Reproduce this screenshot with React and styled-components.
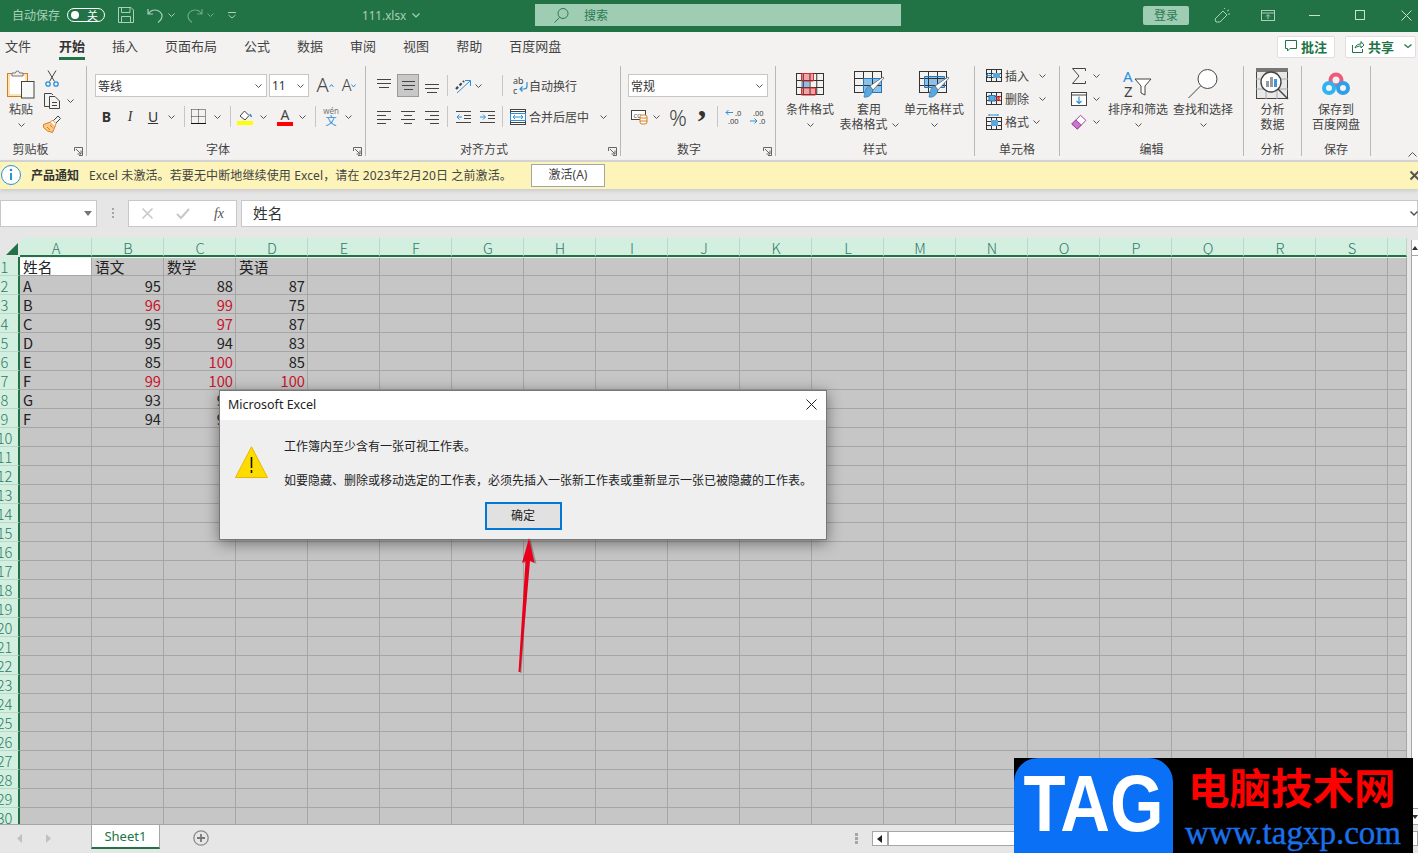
import React from "react";
import styled, { createGlobalStyle } from "styled-components";

const UI = `"Noto Sans", "Noto Sans CJK SC", sans-serif`;
const CELL = `"Noto Sans CJK SC", "Noto Sans", sans-serif`;
const GREEN = "#217346";
const INK = "#444";
const BLUE = "#2b8fd9";

const GlobalStyle = createGlobalStyle`
  html, body { margin: 0; padding: 0; height: 100%; overflow: hidden; background: #e6e6e6; }
  #root { height: 100%; }
`;

const Page = styled.div`
  position: relative;
  width: 1418px;
  height: 853px;
  overflow: hidden;
  display: flex;
  flex-direction: column;
  font-family: ${UI};
  font-size: 12px;
  color: ${INK};
`;

/* ---- title bar ---- */
const TitleBar = styled.div`
  height: 32px;
  flex-shrink: 0;
  box-sizing: border-box;
  padding-bottom: 2px;
  background: ${GREEN};
  display: grid;
  grid-template-columns: 535px 366px 1fr;
  align-items: center;
  color: #a9d0bb;
`;
const TitleSide = styled.div`
  display: flex;
  align-items: center;
  padding-left: ${(p) => p.$pl || 0}px;
`;
const TitleSlot = styled.span`
  display: flex;
  align-items: center;
  justify-content: center;
  width: ${(p) => p.$w}px;
  margin-left: ${(p) => p.$ml || 0}px;
  flex-shrink: 0;
`;
const AutoSave = styled.span`
  width: 48px;
  white-space: nowrap;
  font-size: 12px;
`;
const Toggle = styled.span`
  margin-left: 7px;
  width: 38px;
  height: 14px;
  border: 1px solid #fff;
  border-radius: 8px;
  box-sizing: border-box;
  display: flex;
  align-items: center;
  justify-content: space-between;
  padding: 0 6px 0 3px;
  color: #fff;
  font-size: 11px;
  &::before {
    content: "";
    width: 8px;
    height: 8px;
    border-radius: 50%;
    background: #fff;
  }
`;
const FileName = styled.span`
  margin-left: 126px;
  font-size: 11.7px;
  display: flex;
  align-items: center;
  gap: 6px;
`;
const SearchBox = styled.div`
  height: 22px;
  background: #9fcdb3;
  display: flex;
  align-items: center;
  padding-left: 19px;
  gap: 16px;
  color: #2c7a52;
  font-size: 12px;
`;
const Login = styled.span`
  margin-left: 242px;
  width: 46px;
  height: 19px;
  border-radius: 2px;
  background: #9fcdb3;
  color: #2c7a52;
  text-align: center;
  line-height: 20px;
  font-size: 12px;
`;

/* ---- tabs ---- */
const TabBar = styled.div`
  height: 32px;
  flex-shrink: 0;
  background: #f3f2f1;
  display: flex;
  padding: 0 2px 0 5px;
`;
const TabList = styled.div`
  display: flex;
  gap: 27px;
`;
const Tab = styled.span`
  height: 28px;
  box-sizing: border-box;
  padding-top: 5px;
  line-height: 19px;
  font-size: 13px;
  color: ${(p) => (p.$active ? "#333" : INK)};
  font-weight: ${(p) => (p.$active ? 700 : 400)};
  border-bottom: 3px solid ${(p) => (p.$active ? GREEN : "transparent")};
  margin-left: ${(p) => (p.$active ? 1 : 0)}px;
`;
const TabActions = styled.div`
  margin-left: auto;
  margin-top: 4px;
  display: flex;
  gap: 10px;
`;
const ActionButton = styled.span`
  width: ${(p) => p.$w}px;
  height: 22px;
  box-sizing: border-box;
  background: #fff;
  border: 1px solid #e1dfdd;
  border-radius: 2px;
  display: flex;
  align-items: center;
  justify-content: ${(p) => (p.$start ? "flex-start" : "center")};
  padding: 0 0 2px ${(p) => (p.$start ? 6 : 0)}px;
  gap: 4px;
  color: ${GREEN};
  font-weight: 700;
  font-size: 13px;
`;

/* ---- ribbon ---- */
const Ribbon = styled.div`
  height: 96px;
  flex-shrink: 0;
  box-sizing: border-box;
  padding: 2px 0 4px;
  background: #f3f2f1;
  display: flex;
  position: relative;
`;
const Group = styled.div`
  width: ${(p) => p.$w}px;
  box-sizing: border-box;
  border-right: 1px solid #b8b8b8;
  display: flex;
  flex-direction: column;
`;
const GroupBody = styled.div`
  flex: 1;
  display: flex;
  padding-left: ${(p) => p.$pl || 0}px;
`;
const Rows = styled.div`
  display: flex;
  flex-direction: column;
  gap: 8px;
  padding-top: 8px;
`;
const ToolRow = styled.div`
  display: flex;
  align-items: center;
  height: 23px;
  white-space: nowrap;
`;
const Tool = styled.span`
  width: ${(p) => p.$w}px;
  height: ${(p) => (p.$active ? "23px" : "auto")};
  margin-left: ${(p) => p.$ml || 0}px;
  flex-shrink: 0;
  display: flex;
  align-items: center;
  justify-content: center;
  box-sizing: border-box;
  background: ${(p) => (p.$active ? "#c8c8c8" : "transparent")};
  border: ${(p) => (p.$active ? "1px solid #9b9b9b" : "0")};
`;
const Divider = styled.span`
  width: 1px;
  height: 21px;
  flex-shrink: 0;
  background: #c8c6c4;
  margin-left: ${(p) => p.$ml || 0}px;
`;
const Select = styled.span`
  width: ${(p) => p.$w}px;
  height: 23px;
  margin-left: ${(p) => p.$ml || 0}px;
  box-sizing: border-box;
  background: #fff;
  border: 1px solid #c8c6c4;
  display: flex;
  align-items: center;
  justify-content: space-between;
  padding: 0 4px 0 2px;
  color: #333;
  font-size: 12px;
`;
const RowText = styled.span`
  margin-left: ${(p) => p.$ml || 0}px;
  font-size: 12px;
  color: ${INK};
`;
const Stack = styled.div`
  width: ${(p) => p.$w || "auto"};
  display: flex;
  flex-direction: column;
  gap: 3px;
  padding-top: ${(p) => p.$pt || 0}px;
  box-sizing: border-box;
`;
const StackRow = styled.div`
  height: 20px;
  display: flex;
  align-items: center;
  white-space: nowrap;
`;
const BigButton = styled.div`
  width: ${(p) => p.$w}px;
  margin-left: ${(p) => p.$ml || 0}px;
  flex-shrink: 0;
  padding-top: 4px;
  display: flex;
  flex-direction: column;
  align-items: center;
`;
const BigIcon = styled.div`
  height: 32px;
  box-sizing: border-box;
  padding-bottom: 4px;
  display: flex;
  align-items: center;
  justify-content: center;
`;
const BigLine = styled.div`
  height: 15px;
  line-height: 15px;
  font-size: 12px;
  white-space: nowrap;
  display: flex;
  align-items: center;
  gap: 4px;
  color: ${INK};
`;
const GroupLabel = styled.div`
  position: relative;
  height: 15px;
  line-height: 17px;
  text-align: center;
  font-size: 12px;
  color: ${INK};
  padding-right: ${(p) => p.$pr || 0}px;
`;
const Launcher = styled.svg`
  position: absolute;
  right: 3px;
  bottom: 0;
`;
const Collapse = styled.svg`
  position: absolute;
  right: 1px;
  bottom: 3px;
`;
const LetterA = styled.span`
  font-size: ${(p) => p.$s}px;
  font-weight: 300;
  line-height: 1;
  color: ${INK};
  position: relative;
  top: -1px;
`;
const StyleLetter = styled.span`
  font-size: 14px;
  font-weight: ${(p) => (p.$b ? 700 : 400)};
  font-style: ${(p) => (p.$i ? "italic" : "normal")};
  text-decoration: ${(p) => (p.$u ? "underline" : "none")};
  color: #333;
  font-family: ${(p) => (p.$b || p.$u ? UI : `"Liberation Serif", serif`)};
`;
const Percent = styled.span`
  font-size: 22px;
  font-weight: 300;
  line-height: 1;
  color: ${INK};
`;
const Comma = styled.span`
  font-family: "Liberation Serif", serif;
  font-size: 34px;
  font-weight: 700;
  line-height: 1;
  height: 21px;
  color: #333;
  position: relative;
  top: -18px;
`;

/* ---- notice ---- */
const Notice = styled.div`
  height: 29px;
  flex-shrink: 0;
  box-sizing: border-box;
  border-top: 2px solid #d2d2d2;
  padding: 0 0 1px 1px;
  background: #fcf4b8;
  display: flex;
  align-items: center;
  font-size: 12px;
  color: #444;
  box-shadow: 0 2px 4px rgba(0, 0, 0, 0.12);
  position: relative;
  z-index: 1;
`;
const NoticeTitle = styled.b`
  margin-left: 10px;
  color: #333;
  padding-bottom: 1px;
`;
const NoticeText = styled.span`
  margin-left: 10px;
  padding-bottom: 1px;
  white-space: nowrap;
  width: 418px;
  letter-spacing: 0.12px;
`;
const ActivateButton = styled.span`
  margin-left: 24px;
  width: 74px;
  height: 23px;
  box-sizing: border-box;
  background: #fff;
  border: 1px solid #a6a6a6;
  text-align: center;
  line-height: 20px;
`;
const NoticeClose = styled.span`
  margin-left: auto;
  margin-right: -1px;
  display: flex;
`;

/* ---- formula bar ---- */
const FormulaBar = styled.div`
  height: 49px;
  flex-shrink: 0;
  box-sizing: border-box;
  background: #e6e6e6;
  padding-top: 11px;
  display: flex;
  align-items: flex-start;
`;
const FormulaBox = styled.div`
  height: 27px;
  box-sizing: border-box;
  background: #fff;
  border: 1px solid #c8c8c8;
  display: flex;
  align-items: center;
  width: ${(p) => (p.$w ? `${p.$w}px` : "auto")};
  flex: ${(p) => (p.$w ? "none" : 1)};
  margin-left: ${(p) => p.$ml || 0}px;
`;
const FormulaText = styled.span`
  font-family: ${CELL};
  font-size: 14.67px;
  margin-left: 11px;
  padding-bottom: 3px;
  color: #333;
`;
const FxLabel = styled.span`
  font-family: "Liberation Serif", serif;
  font-style: italic;
  font-size: 14px;
  color: #555;
`;
const DotsV = styled.span`
  width: 2px;
  height: 10px;
  margin: 8px 14px 0 15px;
  background: repeating-linear-gradient(#a6a6a6 0 2px, transparent 2px 4px);
`;

/* ---- sheet ---- */
const SheetArea = styled.div`
  flex: 1;
  display: flex;
  overflow: hidden;
  background: #e6e6e6;
`;
const SheetGrid = styled.div`
  width: 1407px;
  flex-shrink: 0;
  display: grid;
  grid-template-columns: 20px repeat(19, 72px) 19px;
  grid-auto-rows: 19px;
  font-family: ${CELL};
  font-size: 14.67px;
  overflow: hidden;
`;
const HeadCell = styled.div`
  box-sizing: border-box;
  background: #d3efdf;
  border-bottom: 2px solid ${GREEN};
  border-right: 1px solid #bcd6c7;
  padding-left: 1px;
  color: #2f7a6a;
  text-align: center;
  line-height: 19px;
  font-weight: 300;
  overflow: hidden;
`;
const Corner = styled(HeadCell)`
  border-right: 0;
  position: relative;
  background: #e6e6e6;
  border-bottom: 0;
  &::after {
    content: "";
    position: absolute;
    right: 2px;
    bottom: 2px;
    border-style: solid;
    border-width: 0 0 12px 12px;
    border-color: transparent transparent ${GREEN} transparent;
  }
`;
const RowHead = styled.div`
  box-sizing: border-box;
  background: #d3efdf;
  border-right: 2px solid ${GREEN};
  border-bottom: 1px solid #bcd6c7;
  color: #2f7a6a;
  font-weight: 300;
  display: flex;
  justify-content: center;
  width: 20px;
  padding-right: 9px;
  line-height: 19px;
  white-space: nowrap;
  overflow: hidden;
`;
const Cell = styled.div`
  box-sizing: border-box;
  background: ${(p) => (p.$selected ? "#fff" : "#c6c6c6")};
  border-right: 1px solid #a6a6a6;
  border-bottom: 1px solid #a6a6a6;
  border-top: ${(p) => (p.$first ? "1px solid #f2f2f2" : "0")};
  padding: 0 2px 0 3px;
  text-align: ${(p) => (p.$num ? "right" : "left")};
  color: ${(p) => (p.$red ? "#c8142c" : "#222")};
  font-weight: 400;
  line-height: ${(p) => (p.$first ? "18px" : "20px")};
  white-space: nowrap;
  overflow: hidden;
`;
const VScroll = styled.div`
  flex: 1;
  margin: 2px 0 0 4px;
  background: #fff;
  border-left: 1px solid #a6a6a6;
  display: flex;
  flex-direction: column;
  justify-content: space-between;
  align-items: center;
`;
const VScrollButton = styled.div`
  width: 100%;
  height: 15px;
  border-bottom: 1px solid #a6a6a6;
  display: flex;
  align-items: center;
  justify-content: center;
  & + & {
    border-bottom: 0;
    border-top: 1px solid #a6a6a6;
  }
`;

/* ---- bottom bar ---- */
const BottomBar = styled.div`
  height: 29px;
  flex-shrink: 0;
  box-sizing: border-box;
  background: #e6e6e6;
  border-top: 1px solid #a6a6a6;
  display: flex;
  align-items: flex-start;
`;
const NavArrow = styled.svg`
  margin: 9px 0 0 ${(p) => p.$ml}px;
  flex-shrink: 0;
`;
const SheetTab = styled.div`
  margin-left: 40px;
  width: 69px;
  height: 24px;
  box-sizing: border-box;
  background: #fff;
  border-left: 1px solid #a6a6a6;
  border-right: 1px solid #a6a6a6;
  border-bottom: 2px solid ${GREEN};
  text-align: center;
  color: ${GREEN};
  font-size: 13px;
  line-height: 23px;
`;
const AddSheet = styled.svg`
  margin: 5px 0 0 33px;
  flex-shrink: 0;
`;
const BottomDots = styled.span`
  width: 3px;
  height: 11px;
  margin: 8px 0 0 646px;
  background: repeating-linear-gradient(#a6a6a6 0 3px, transparent 3px 4px);
`;
const HScroll = styled.div`
  margin: 6px 0 0 14px;
  width: 547px;
  height: 15px;
  box-sizing: border-box;
  background: #fff;
  border: 1px solid #a6a6a6;
  display: flex;
`;
const HScrollButton = styled.div`
  width: 14px;
  border-right: 2px solid #a6a6a6;
  display: flex;
  align-items: center;
  justify-content: center;
`;

/* ---- dialog ---- */
const Dialog = styled.div`
  position: absolute;
  left: 219px;
  top: 390px;
  width: 608px;
  height: 150px;
  box-sizing: border-box;
  border: 1px solid #777;
  background: #efefef;
  box-shadow: 0 3px 14px rgba(0, 0, 0, 0.45);
  z-index: 3;
  display: flex;
  flex-direction: column;
`;
const DialogTitle = styled.div`
  height: 29px;
  flex-shrink: 0;
  box-sizing: border-box;
  padding: 0 9px 3px 8px;
  background: #fff;
  display: flex;
  align-items: center;
  justify-content: space-between;
  font-size: 12.5px;
  color: #222;
`;
const DialogBody = styled.div`
  display: flex;
  padding: 26px 0 0 15px;
`;
const DialogText = styled.div`
  margin: -8px 0 0 16px;
  font-size: 12px;
  color: #222;
  white-space: nowrap;
`;
const DialogLine = styled.div`
  height: 17px;
  line-height: 17px;
  margin-bottom: 17px;
`;
const DialogFoot = styled.div`
  display: flex;
  justify-content: center;
  margin-top: -4px;
`;
const OkButton = styled.span`
  width: 77px;
  height: 28px;
  box-sizing: border-box;
  border: 2px solid #0078d7;
  background: #e1e1e1;
  text-align: center;
  line-height: 24px;
  font-size: 12px;
  color: #222;
`;
const Arrow = styled.svg`
  position: absolute;
  left: 510px;
  top: 535px;
  z-index: 4;
`;

/* ---- watermark ---- */
const Watermark = styled.div`
  position: absolute;
  left: 1014px;
  top: 758px;
  width: 399px;
  height: 95px;
  background: #000;
  z-index: 5;
  display: flex;
`;
const WatermarkBadge = styled.div`
  width: 159px;
  height: 95px;
  border-radius: 24px 24px 0 0;
  background: #0a70f5;
  color: #fff;
  font-family: "Liberation Sans", sans-serif;
  font-weight: 700;
  font-size: 80px;
  line-height: 92px;
  text-align: center;
  overflow: hidden;
  white-space: nowrap;
`;
const BadgeLetters = styled.span`
  display: inline-block;
  transform: scaleX(0.86);
  margin: 0 -20px;
`;
const WatermarkText = styled.div`
  display: flex;
  flex-direction: column;
  margin-left: 15px;
`;
const WatermarkName = styled.div`
  color: #f00;
  font-family: "Noto Sans CJK SC", sans-serif;
  font-weight: 700;
  font-size: 41.5px;
  line-height: 48px;
  margin-top: 4px;
  white-space: nowrap;
`;
const WatermarkUrl = styled.div`
  color: #1a70e8;
  font-family: "Liberation Serif", serif;
  font-size: 33px;
  line-height: 36px;
  margin: 5px 0 0 -3px;
  -webkit-text-stroke: 0.4px #1a70e8;
`;

/* ---- drawn icons ---- */
const IconSvg = styled.svg`
  display: block;
  overflow: visible;
  flex-shrink: 0;
  margin-left: ${(p) => p.$ml || 0};
  margin-right: ${(p) => p.$mr || 0};
`;
const Svg = ({ w, h, children, ...rest }) => (
  <IconSvg width={w} height={h} viewBox={`0 0 ${w} ${h}`} fill="none" {...rest}>
    {children}
  </IconSvg>
);
const Chev = ({ w = 10, ml = 0, color = "#555" }) => (
  <Tool $w={w} $ml={ml}>
    <Svg w={7} h={4}>
      <polyline points="0.5,0.5 3.5,3.5 6.5,0.5" stroke={color} />
    </Svg>
  </Tool>
);
const Lines = ({ rows }) => (
  <Svg w={15} h={16}>
    {rows.map(([a, b, y]) => (
      <line key={y} x1={a} x2={b} y1={y + 0.5} y2={y + 0.5} stroke={INK} />
    ))}
  </Svg>
);
const Paste = () => (
  <Svg w={28} h={31}>
    <rect x="0.5" y="4.5" width="20" height="23" fill="#fbe3b8" stroke="#d67f21" />
    <rect x="3" y="7" width="15" height="18" fill="#fff" />
    <path d="M5 7V4h3.5a2 2 0 0 1 4 0H16v3z" fill="#f3f2f1" stroke="#777" />
    <rect x="14.5" y="12.5" width="12.5" height="16.5" fill="#f8f8f8" stroke={INK} />
  </Svg>
);
const Scissors = () => (
  <Svg w={14} h={17}>
    <path d="M3 0.5l6.5 11M11 0.5L4.5 11.5" stroke={INK} />
    <circle cx="3" cy="14" r="2.2" stroke={BLUE} strokeWidth="1.3" />
    <circle cx="11" cy="14" r="2.2" stroke={BLUE} strokeWidth="1.3" />
  </Svg>
);
const CopyIcon = () => (
  <Svg w={16} h={16}>
    <path d="M5 13.5H0.5V0.5H7.5L9 2" stroke={INK} />
    <path d="M5.5 3.5H11L15.5 8V15.5H5.5z" fill="#f3f2f1" stroke={INK} />
    <path d="M8 9.5h5M8 12.5h5" stroke={INK} />
  </Svg>
);
const Painter = () => (
  <Svg w={18} h={17}>
    <path d="M0.5 8.500l7-2.500 4.500 4.500-2.500 6-5-1.500-4-3.500z" fill="#fbc98a" stroke="#e07b1a" />
    <path d="M4 11l3 3M7 9l2.500 2.500" stroke="#e07b1a" />
    <path d="M7.500 6l2-2 3.500 3.500-1 3" fill="#fff" stroke="#e07b1a" />
    <path d="M10.500 4.500l4.500-4.500 2.500 2.500-4.500 4.500" fill="#f3f2f1" stroke={INK} />
  </Svg>
);
const Borders = () => (
  <Svg w={15} h={15}>
    <path d="M0.5 0.5h14v14M0.5 0.5v14M7.5 0.5v14M0.5 7.5h14" stroke="#333" strokeDasharray="1 1" />
    <line x1="0" x2="15" y1="14.5" y2="14.5" stroke="#111" />
  </Svg>
);
const FillColor = () => (
  <Svg w={16} h={16}>
    <path d="M3 7l4.5-5 4.5 4.5-4 4.500z" stroke={INK} fill="#fff" />
    <path d="M13 5l1.5 3" stroke={BLUE} strokeWidth="1.6" />
    <rect x="0" y="12" width="16" height="4" fill="#ff0" />
  </Svg>
);
const FontColor = styled.span`
  width: 16px;
  height: 18px;
  display: flex;
  justify-content: center;
  line-height: 14px;
  font-size: 14px;
  color: ${INK};
  box-sizing: border-box;
  border-bottom: 4px solid #f00;
`;
const Phonetic = styled.span`
  display: flex;
  flex-direction: column;
  align-items: center;
  font-size: 8px;
  line-height: 8px;
  color: #777;
  & b {
    font-weight: 400;
    font-size: 11px;
    line-height: 11px;
    color: ${BLUE};
  }
`;
const Orient = () => (
  <Svg w={17} h={16}>
    <path d="M2 11L10 3" stroke={INK} strokeWidth="2.2" strokeDasharray="3 2" />
    <path d="M3 15L16 3M11 2.5h5.5V8" stroke={BLUE} />
  </Svg>
);
const Indent = ({ inc }) => (
  <Svg w={15} h={12}>
    <path d={inc ? "M0 6h5M3 3.5L5.5 6 3 8.5" : "M1 6h5M3.5 3.5L1 6l2.5 2.5"} stroke={BLUE} />
    <path d="M0 0.5h15M8 4.5h7M8 7.5h7M0 11.5h15" stroke={INK} />
  </Svg>
);
const WrapIcon = () => (
  <Svg w={16} h={17}>
    <text x="0" y="7" fontSize="9" fill={INK} fontFamily={UI}>ab</text>
    <text x="0" y="16.500" fontSize="9" fill={INK} fontFamily={UI}>c</text>
    <path d="M14 5v4a3 3 0 0 1-3 3H7M9.5 9.5L7 12l2.5 2.5" stroke={BLUE} strokeWidth="1.2" />
  </Svg>
);
const MergeIcon = () => (
  <Svg w={16} h={16}>
    <rect x="0.5" y="0.5" width="15" height="15" fill="#fff" stroke={INK} />
    <rect x="0.5" y="4.5" width="15" height="7" fill="#fff" stroke={BLUE} />
    <path d="M3 8h10M5 6L3 8l2 2M11 6l2 2-2 2" stroke={BLUE} />
    <path d="M0 2.5h16M0 13.5h16" stroke={INK} />
  </Svg>
);
const Accounting = () => (
  <Svg w={17} h={15}>
    <rect x="0.5" y="1.5" width="14" height="9" fill="#fff" stroke={INK} />
    <text x="2.5" y="8.5" fontSize="6" fill={INK} fontFamily={UI}>CC</text>
    <rect x="9" y="6" width="7" height="9" rx="2" fill="#fff" stroke="#d67f21" />
    <path d="M9 9h7M9 12h7" stroke="#d67f21" />
  </Svg>
);
const Decimal = ({ more }) => (
  <Svg w={17} h={16}>
    <path d={more ? "M8 3.5H1M3.5 1L1 3.5 3.5 6" : "M1 12h7M5.5 9.500L8 12l-2.5 2.500"} stroke={BLUE} />
    <text x={more ? 10 : 4} y="6.500" fontSize="7.500" fill={INK} fontFamily={UI}>{more ? ".0" : ".00"}</text>
    <text x={more ? 3 : 10} y="15" fontSize="7.500" fill={INK} fontFamily={UI}>{more ? ".00" : ".0"}</text>
  </Svg>
);
const Brush = () => (
  <g>
    <path d="M10 26c4 1 8-2 9-7l-3-4c-4 0-5 5-6 11z" fill="#5ba7dc" stroke="#2b7cb8" strokeWidth=".7" />
    <path d="M16 15L29 6l1 1-11 12z" fill="#fff" stroke="#666" strokeWidth=".8" />
  </g>
);
const GridLines = ({ x = 0, y = 0, w, h, cols, rows, color = "#333" }) => {
  const cw = w / cols;
  const rh = h / rows;
  return (
    <g stroke={color}>
      <rect x={x + 0.5} y={y + 0.5} width={w} height={h} />
      {Array.from({ length: cols - 1 }, (_, i) => (
        <line key={`c${i}`} x1={x + 0.5 + cw * (i + 1)} x2={x + 0.5 + cw * (i + 1)} y1={y} y2={y + h} />
      ))}
      {Array.from({ length: rows - 1 }, (_, i) => (
        <line key={`r${i}`} x1={x} x2={x + w} y1={y + 0.5 + rh * (i + 1)} y2={y + 0.5 + rh * (i + 1)} />
      ))}
    </g>
  );
};
const CondFormat = () => (
  <Svg w={28} h={23}>
    <rect x="5" y="0.5" width="12" height="7" fill="#f8a0a5" />
    <rect x="5" y="15" width="14" height="7" fill="#f8a0a5" />
    <rect x="5" y="8" width="8" height="7" fill="#8cc0e8" />
    <GridLines w={27} h={21} cols={4} rows={3} />
    <path d="M5.5 8V0.5h12V8zM5.5 22V15h14v7z" stroke="#d92b2b" />
  </Svg>
);
const TableFormat = () => (
  <Svg w={30} h={27}>
    <rect x="10" y="7" width="18" height="14" fill="#8cc0e8" />
    <GridLines w={27} h={21} cols={3} rows={3} />
    <path d="M9.5 7.5h18v14h-18z" stroke="#1f78c1" />
    <Brush />
  </Svg>
);
const CellStyles = () => (
  <Svg w={30} h={27}>
    <rect x="5" y="5" width="20" height="11" fill="#8cc0e8" />
    <GridLines w={27} h={21} cols={3} rows={3} />
    <path d="M5.5 5.5h20v11h-20z" stroke="#1f78c1" />
    <Brush />
  </Svg>
);
const InsertCells = () => (
  <Svg w={16} h={14}>
    <GridLines w={15} h={12} cols={3} rows={3} />
    <rect x="7" y="4" width="7" height="5" fill="#5ba7dc" />
    <path d="M6 6.5H0.5M3 4L0.5 6.5 3 9" stroke={BLUE} />
  </Svg>
);
const DeleteCells = () => (
  <Svg w={16} h={14}>
    <GridLines w={15} h={12} cols={3} rows={3} />
    <rect x="3" y="3.5" width="6" height="5.5" fill="#5ba7dc" stroke="#1f78c1" />
    <path d="M10.5 4l4 5M14.5 4l-4 5" stroke="#e33" strokeWidth="1.3" />
  </Svg>
);
const FormatCells = () => (
  <Svg w={16} h={16}>
    <GridLines y={3} w={15} h={12} cols={3} rows={3} />
    <rect x="5" y="6" width="7" height="6" fill="#5ba7dc" />
    <path d="M3 1h9M3 0v2M12 0v2" stroke={BLUE} />
  </Svg>
);
const Sum = () => (
  <Svg w={14} h={16}>
    <path d="M13.500 3V0.500H0.500L7 8 0.500 15.500H13.500V13" stroke={INK} />
  </Svg>
);
const FillDown = () => (
  <Svg w={16} h={14}>
    <rect x="0.5" y="0.5" width="15" height="13" fill="#fff" stroke={INK} />
    <path d="M0 3h16" stroke={INK} />
    <path d="M8 4.5v7M5.5 9L8 11.5 10.5 9" stroke={BLUE} strokeWidth="1.2" />
  </Svg>
);
const Eraser = () => (
  <Svg w={16} h={16}>
    <path d="M0.8 10L9.5 1.3l5.4 5-8.6 8.9z" fill="#fff" stroke="#a23fa8" />
    <path d="M0.8 10l4-4 5.4 5-4 4z" fill="#c779c9" stroke="#a23fa8" />
  </Svg>
);
const SortFilter = () => (
  <Svg w={30} h={29}>
    <text x="0" y="12" fontSize="15" fill={BLUE} fontFamily={UI}>A</text>
    <text x="1" y="27" fontSize="15" fill={INK} fontFamily={UI}>Z</text>
    <path d="M12 9h16l-6 7v9l-4-2v-7z" fill="#fff" stroke={INK} />
  </Svg>
);
const FindIcon = () => (
  <Svg w={30} h={30}>
    <circle cx="19.5" cy="10" r="9.5" fill="#fff" stroke={INK} />
    <path d="M12.5 17L0.5 29" stroke={INK} />
  </Svg>
);
const AnalyzeIcon = () => (
  <Svg w={33} h={32}>
    <rect x="0.5" y="0.5" width="31" height="30" fill="#e8e8e8" stroke={INK} />
    <rect x="0" y="0" width="32" height="4" fill="#777" />
    <path d="M0 11h32M0 21h32M10 4v27M21 4v27" stroke="#aaa" />
    <circle cx="15" cy="14" r="10" fill="#fff" stroke={INK} strokeWidth="1.4" />
    <path d="M22 21l10 10" stroke={INK} strokeWidth="1.4" />
    <rect x="10" y="13" width="3" height="6" fill="#999" />
    <rect x="14" y="9" width="3" height="10" fill="#999" />
    <rect x="18" y="11" width="3" height="8" fill="#3a96dd" />
  </Svg>
);
const BaiduIcon = () => (
  <Svg w={28} h={24}>
    <circle cx="14" cy="8" r="5.5" stroke="#ee5a78" strokeWidth="4" />
    <circle cx="7" cy="16" r="5" stroke="#2cb5f0" strokeWidth="4" />
    <circle cx="21" cy="16" r="5" stroke="#2f9fe8" strokeWidth="4" />
  </Svg>
);
const CloseX = ({ s = 12, color = "#333", width = 1 }) => (
  <Svg w={s} h={s}>
    <path d={`M0.5 0.5L${s - 0.5} ${s - 0.5}M${s - 0.5} 0.5L0.5 ${s - 0.5}`} stroke={color} strokeWidth={width} />
  </Svg>
);

const LauncherMark = () => (
  <Launcher width="9" height="9" viewBox="0 0 9 9" fill="none">
    <path d="M0.5 4V0.5H8.5V8.5H5M2 2l5 5M7 3.5V7H3.5" stroke="#666" />
  </Launcher>
);

/* ---- data ---- */
const COLS = "ABCDEFGHIJKLMNOPQRS".split("");
const TABS = ["文件", "开始", "插入", "页面布局", "公式", "数据", "审阅", "视图", "帮助", "百度网盘"];
const TABLE = [
  ["姓名", "语文", "数学", "英语"],
  ["A", 95, 88, 87],
  ["B", 96, 99, 75],
  ["C", 95, 97, 87],
  ["D", 95, 94, 83],
  ["E", 85, 100, 85],
  ["F", 99, 100, 100],
  ["G", 93, 92],
  ["F", 94, 90],
];
const RED = new Set(["B3", "C3", "C4", "C6", "B7", "C7", "D7"]);

function Sheet() {
  const cells = [<Corner key="corner" />];
  COLS.forEach((c) => cells.push(<HeadCell key={c}>{c}</HeadCell>));
  cells.push(<HeadCell key="tail" />);
  for (let r = 1; r <= 30; r++) {
    cells.push(<RowHead key={`r${r}`}>{r}</RowHead>);
    for (let c = 0; c < 20; c++) {
      const value = TABLE[r - 1] ? TABLE[r - 1][c] : undefined;
      const name = `${COLS[c]}${r}`;
      cells.push(
        <Cell
          key={name + c}
          $first={r === 1}
          $selected={r === 1 && c === 0}
          $num={typeof value === "number"}
          $red={RED.has(name)}
        >
          {value}
        </Cell>
      );
    }
  }
  return <SheetGrid>{cells}</SheetGrid>;
}

export default function App() {
  return (
    <Page>
      <GlobalStyle />
      <TitleBar>
        <TitleSide $pl={12}>
          <AutoSave>自动保存</AutoSave>
          <Toggle>关</Toggle>
          <TitleSlot $w={16} $ml={13}>
            <Svg w={16} h={16}>
              <path d="M0.5 0.5H13L15.5 3V15.5H0.5z" stroke="#a9d0bb" />
              <path d="M3.5 0.5V5.5H12V0.5M3.5 15.5V9.5H12.5V15.5" stroke="#a9d0bb" />
            </Svg>
          </TitleSlot>
          <TitleSlot $w={16} $ml={13}>
            <Svg w={16} h={15}>
              <path d="M1 1v5h5M1.5 6C3 3 5 2 8 2c4 0 7 3 7 6s-2 5-4 6.5" stroke="#a9d0bb" strokeWidth="1.2" />
            </Svg>
          </TitleSlot>
          <Chev w={7} ml={5} color="#a9d0bb" />
          <TitleSlot $w={16} $ml={12}>
            <Svg w={16} h={15} opacity=".55">
              <path d="M15 1v5h-5M14.5 6C13 3 11 2 8 2 4 2 1 5 1 8s2 5 4 6.5" stroke="#a9d0bb" strokeWidth="1.2" />
            </Svg>
          </TitleSlot>
          <Chev w={7} ml={4} color="#6fae8d" />
          <TitleSlot $w={8} $ml={14}>
            <Svg w={8} h={6}>
              <path d="M0 0.5h8M0.5 3l3.5 3 3.5-3" stroke="#a9d0bb" />
            </Svg>
          </TitleSlot>
          <FileName>
            111.xlsx
            <Svg w={8} h={5}>
              <polyline points="0.5,0.5 4,4 7.5,0.5" stroke="#a9d0bb" strokeWidth="1.2" />
            </Svg>
          </FileName>
        </TitleSide>
        <SearchBox>
          <Svg w={14} h={15}>
            <circle cx="9" cy="5.5" r="5" stroke="#2c7a52" />
            <path d="M5.5 9.5L0.5 14.5" stroke="#2c7a52" />
          </Svg>
          搜索
        </SearchBox>
        <TitleSide>
          <Login>登录</Login>
          <TitleSlot $w={16} $ml={25}>
            <Svg w={16} h={17}>
              <path d="M1 12L9 4l4 4-7 7H2zM10 2l1-1M13 4l2-1M14 7h2" stroke="#a9d0bb" />
            </Svg>
          </TitleSlot>
          <TitleSlot $w={14} $ml={31}>
            <Svg w={14} h={11}>
              <rect x="0.5" y="0.5" width="13" height="10" stroke="#a9d0bb" />
              <path d="M0 3h14M7 9V5M5 6.5L7 4.5 9 6.5" stroke="#a9d0bb" />
            </Svg>
          </TitleSlot>
          <TitleSlot $w={11} $ml={34}>
            <Svg w={11} h={1}>
              <path d="M0 0.5h11" stroke="#c9e0d3" />
            </Svg>
          </TitleSlot>
          <TitleSlot $w={11} $ml={35}>
            <Svg w={11} h={11}>
              <rect x="0.5" y="0.5" width="9" height="9" stroke="#c9e0d3" />
            </Svg>
          </TitleSlot>
          <TitleSlot $w={11} $ml={35}>
            <CloseX s={11} color="#c9e0d3" />
          </TitleSlot>
        </TitleSide>
      </TitleBar>

      <TabBar>
        <TabList>
          {TABS.map((t) => (
            <Tab key={t} $active={t === "开始"}>{t}</Tab>
          ))}
        </TabList>
        <TabActions>
          <ActionButton $w={58}>
            <Svg w={12} h={12}>
              <path d="M0.5 0.5h11v8H5L2.5 11V8.5h-2z" stroke={GREEN} />
            </Svg>
            批注
          </ActionButton>
          <ActionButton $w={71} $start>
            <Svg w={12} h={13}>
              <path d="M0.5 5v7.5h10V9M3 8c1-3 3-4 6-4V1.5L12 5 9 8V6C7 6 5 6.5 3 8z" stroke={GREEN} />
            </Svg>
            共享
            <Svg w={8} h={4} $ml="6px">
              <polyline points="0.5,0.5 4,3.5 7.5,0.5" stroke={GREEN} strokeWidth="1.2" />
            </Svg>
          </ActionButton>
        </TabActions>
      </TabBar>

      <Ribbon>
        <Group $w={87}>
          <GroupBody>
            <BigButton $w={42}>
              <BigIcon><Paste /></BigIcon>
              <BigLine>粘贴</BigLine>
              <BigLine><Chev /></BigLine>
            </BigButton>
            <Stack $pt={2}>
              <StackRow><Tool $w={18} $ml={1}><Scissors /></Tool></StackRow>
              <StackRow><Tool $w={18} $ml={1}><CopyIcon /></Tool><Chev ml={4} /></StackRow>
              <StackRow><Tool $w={18} $ml={1}><Painter /></Tool></StackRow>
            </Stack>
          </GroupBody>
          <GroupLabel $pr={25}>剪贴板<LauncherMark /></GroupLabel>
        </Group>

        <Group $w={279}>
          <GroupBody $pl={8}>
            <Rows>
              <ToolRow>
                <Select $w={172}>等线<Chev w={7} /></Select>
                <Select $w={40} $ml={2}>11<Chev w={7} /></Select>
                <Tool $w={22} $ml={5}><LetterA $s={20}>A</LetterA><Svg w={5} h={3}><polyline points="0.5,3 2.5,0.5 4.5,3" stroke={BLUE} /></Svg></Tool>
                <Tool $w={18} $ml={4}><LetterA $s={16}>A</LetterA><Svg w={5} h={3}><polyline points="0.5,0.5 2.5,3 4.5,0.5" stroke={BLUE} /></Svg></Tool>
              </ToolRow>
              <ToolRow>
                <Tool $w={23}><StyleLetter $b>B</StyleLetter></Tool>
                <Tool $w={24}><StyleLetter $i>I</StyleLetter></Tool>
                <Tool $w={22}><StyleLetter $u>U</StyleLetter></Tool>
                <Chev w={14} />
                <Divider $ml={6} />
                <Tool $w={27}><Borders /></Tool>
                <Chev />
                <Divider $ml={8} />
                <Tool $w={28}><FillColor /></Tool>
                <Chev w={8} />
                <Tool $w={16} $ml={10}><FontColor>A</FontColor></Tool>
                <Chev w={18} />
                <Divider $ml={4} />
                <Tool $w={30}><Phonetic>wén<b>文</b></Phonetic></Tool>
                <Chev w={4} />
              </ToolRow>
            </Rows>
          </GroupBody>
          <GroupLabel $pr={16}>字体<LauncherMark /></GroupLabel>
        </Group>

        <Group $w={255}>
          <GroupBody $pl={8}>
            <Rows>
              <ToolRow>
                <Tool $w={20}><Lines rows={[[0, 14, 1], [0, 14, 5], [2, 12, 9]]} /></Tool>
                <Tool $w={22} $ml={3} $active><Lines rows={[[1, 14, 3], [1, 14, 7], [3, 12, 11]]} /></Tool>
                <Tool $w={26}><Lines rows={[[0, 14, 6], [0, 14, 10], [2, 12, 14]]} /></Tool>
                <Divider $ml={2} />
                <Tool $w={28}><Orient /></Tool>
                <Chev w={4} />
                <Divider $ml={22} />
                <Tool $w={17} $ml={9}><WrapIcon /></Tool>
                <RowText>自动换行</RowText>
              </ToolRow>
              <ToolRow>
                <Tool $w={20}><Lines rows={[[0, 14, 2], [0, 9, 6], [0, 14, 10], [0, 9, 14]]} /></Tool>
                <Tool $w={28}><Lines rows={[[0, 14, 2], [3, 11, 6], [0, 14, 10], [3, 11, 14]]} /></Tool>
                <Tool $w={20}><Lines rows={[[0, 14, 2], [5, 14, 6], [0, 14, 10], [5, 14, 14]]} /></Tool>
                <Divider $ml={5} />
                <Tool $w={30}><Indent /></Tool>
                <Tool $w={18}><Indent inc /></Tool>
                <Divider $ml={6} />
                <Tool $w={16} $ml={7}><MergeIcon /></Tool>
                <RowText $ml={3}>合并后居中</RowText>
                <Chev ml={9} />
              </ToolRow>
            </Rows>
          </GroupBody>
          <GroupLabel $pr={18}>对齐方式<LauncherMark /></GroupLabel>
        </Group>

        <Group $w={155}>
          <GroupBody $pl={7}>
            <Rows>
              <ToolRow><Select $w={140}>常规<Chev w={7} /></Select></ToolRow>
              <ToolRow>
                <Tool $w={16} $ml={3}><Accounting /></Tool>
                <Chev w={8} ml={5} />
                <Tool $w={36}><Percent>%</Percent></Tool>
                <Tool $w={12}><Comma>,</Comma></Tool>
                <Divider $ml={9} />
                <Tool $w={30}><Decimal more /></Tool>
                <Tool $w={18}><Decimal /></Tool>
              </ToolRow>
            </Rows>
          </GroupBody>
          <GroupLabel $pr={18}>数字<LauncherMark /></GroupLabel>
        </Group>

        <Group $w={199}>
          <GroupBody $pl={8}>
            <BigButton $w={52}>
              <BigIcon><CondFormat /></BigIcon>
              <BigLine>条件格式</BigLine>
              <BigLine><Chev /></BigLine>
            </BigButton>
            <BigButton $w={66}>
              <BigIcon><TableFormat /></BigIcon>
              <BigLine>套用</BigLine>
              <BigLine>表格格式<Chev w={7} /></BigLine>
            </BigButton>
            <BigButton $w={64}>
              <BigIcon><CellStyles /></BigIcon>
              <BigLine>单元格样式</BigLine>
              <BigLine><Chev /></BigLine>
            </BigButton>
          </GroupBody>
          <GroupLabel>样式</GroupLabel>
        </Group>

        <Group $w={85}>
          <GroupBody $pl={11}>
            <Stack>
              <StackRow><Tool $w={16}><InsertCells /></Tool><RowText $ml={3}>插入</RowText><Chev ml={8} /></StackRow>
              <StackRow><Tool $w={16}><DeleteCells /></Tool><RowText $ml={3}>删除</RowText><Chev ml={8} /></StackRow>
              <StackRow><Tool $w={16}><FormatCells /></Tool><RowText $ml={3}>格式</RowText><Chev ml={2} /></StackRow>
            </Stack>
          </GroupBody>
          <GroupLabel>单元格</GroupLabel>
        </Group>

        <Group $w={184}>
          <GroupBody $pl={11}>
            <Stack $w="37px">
              <StackRow><Tool $w={16}><Sum /></Tool><Chev ml={4} /></StackRow>
              <StackRow><Tool $w={16}><FillDown /></Tool><Chev ml={4} /></StackRow>
              <StackRow><Tool $w={16}><Eraser /></Tool><Chev ml={4} /></StackRow>
            </Stack>
            <BigButton $w={60}>
              <BigIcon><SortFilter /></BigIcon>
              <BigLine>排序和筛选</BigLine>
              <BigLine><Chev /></BigLine>
            </BigButton>
            <BigButton $w={60} $ml={5}>
              <BigIcon><FindIcon /></BigIcon>
              <BigLine>查找和选择</BigLine>
              <BigLine><Chev /></BigLine>
            </BigButton>
          </GroupBody>
          <GroupLabel>编辑</GroupLabel>
        </Group>

        <Group $w={58}>
          <GroupBody>
            <BigButton $w={57}>
              <BigIcon><AnalyzeIcon /></BigIcon>
              <BigLine>分析</BigLine>
              <BigLine>数据</BigLine>
            </BigButton>
          </GroupBody>
          <GroupLabel>分析</GroupLabel>
        </Group>

        <Group $w={69}>
          <GroupBody>
            <BigButton $w={68}>
              <BigIcon><BaiduIcon /></BigIcon>
              <BigLine>保存到</BigLine>
              <BigLine>百度网盘</BigLine>
            </BigButton>
          </GroupBody>
          <GroupLabel>保存</GroupLabel>
        </Group>

        <Collapse width="9" height="5" viewBox="0 0 9 5" fill="none">
          <polyline points="0.5,4.5 4.5,0.5 8.5,4.5" stroke="#555" />
        </Collapse>
      </Ribbon>

      <Notice>
        <Svg w={20} h={20}>
          <circle cx="10" cy="10" r="9.5" fill="#fff" stroke="#2b8fd9" />
          <path d="M10 8v7" stroke="#2b8fd9" strokeWidth="2" />
          <circle cx="10" cy="5" r="1.3" fill="#2b8fd9" />
        </Svg>
        <NoticeTitle>产品通知</NoticeTitle>
        <NoticeText>Excel 未激活。若要无中断地继续使用 Excel，请在 2023年2月20日 之前激活。</NoticeText>
        <ActivateButton>激活(A)</ActivateButton>
        <NoticeClose><CloseX s={9} color="#555" width={2} /></NoticeClose>
      </Notice>

      <FormulaBar>
        <FormulaBox $w={97}>
          <Svg w={8} h={5} $ml="83px">
            <path d="M0 0h8L4 5z" fill="#777" />
          </Svg>
        </FormulaBox>
        <DotsV />
        <FormulaBox $w={109}>
          <Tool $w={36}><CloseX s={11} color="#c8c8c8" width={1.6} /></Tool>
          <Tool $w={36}>
            <Svg w={14} h={11}>
              <path d="M1 6l4 4 8-9" stroke="#c8c8c8" strokeWidth="2" />
            </Svg>
          </Tool>
          <Tool $w={36}><FxLabel>fx</FxLabel></Tool>
        </FormulaBox>
        <FormulaBox $ml={4}>
          <FormulaText>姓名</FormulaText>
          <Svg w={8} h={5} $ml="auto" $mr="-1px">
            <polyline points="0.5,0.5 4,4 7.5,0.5" stroke="#555" strokeWidth="1.5" />
          </Svg>
        </FormulaBox>
      </FormulaBar>

      <SheetArea>
        <Sheet />
        <VScroll>
          <VScrollButton>
            <Svg w={6} h={4}><path d="M0 4L3 0l3 4z" fill="#333" /></Svg>
          </VScrollButton>
          <VScrollButton>
            <Svg w={6} h={4}><path d="M0 0l3 4 3-4z" fill="#333" /></Svg>
          </VScrollButton>
        </VScroll>
      </SheetArea>

      <BottomBar>
        <NavArrow $ml={17} width="5" height="9" viewBox="0 0 5 9"><path d="M5 0L0 4.5 5 9z" fill="#c0c0c0" /></NavArrow>
        <NavArrow $ml={24} width="5" height="9" viewBox="0 0 5 9"><path d="M0 0l5 4.5L0 9z" fill="#c0c0c0" /></NavArrow>
        <SheetTab>Sheet1</SheetTab>
        <AddSheet width="16" height="16" viewBox="0 0 16 16" fill="none">
          <circle cx="8" cy="8" r="7.2" stroke="#8a8a8a" strokeWidth="1.3" />
          <path d="M8 4v8M4 8h8" stroke="#777" strokeWidth="1.8" />
        </AddSheet>
        <BottomDots />
        <HScroll>
          <HScrollButton>
            <Svg w={5} h={8}><path d="M5 0L0 4l5 4z" fill="#222" /></Svg>
          </HScrollButton>
        </HScroll>
      </BottomBar>

      <Dialog>
        <DialogTitle>
          Microsoft Excel
          <CloseX s={11} color="#222" />
        </DialogTitle>
        <DialogBody>
          <Svg w={33} h={32}>
            <path d="M16.5 0.8L32.5 31.5H0.5z" fill="#ffdc00" stroke="#e8b800" />
            <path d="M16.5 11v11" stroke="#111" strokeWidth="1.6" />
            <path d="M16.5 24v3" stroke="#111" strokeWidth="1.6" />
          </Svg>
          <DialogText>
            <DialogLine>工作簿内至少含有一张可视工作表。</DialogLine>
            <DialogLine>如要隐藏、删除或移动选定的工作表，必须先插入一张新工作表或重新显示一张已被隐藏的工作表。</DialogLine>
          </DialogText>
        </DialogBody>
        <DialogFoot>
          <OkButton>确定</OkButton>
        </DialogFoot>
      </Dialog>

      <Arrow width="30" height="145" viewBox="0 0 30 145" fill="none">
        <path d="M19 3l6 25-6-3-1.5 0L10 137l-1.5 0L16 25l-4 3z" fill="#000" opacity=".25" transform="translate(1.5 1)" />
        <path d="M19 3l5.5 25-4.5-2L10.5 137l-2 0L15.5 26l-3.5 2z" fill="#e8001c" />
      </Arrow>

      <Watermark>
        <WatermarkBadge><BadgeLetters>TAG</BadgeLetters></WatermarkBadge>
        <WatermarkText>
          <WatermarkName>电脑技术网</WatermarkName>
          <WatermarkUrl>www.tagxp.com</WatermarkUrl>
        </WatermarkText>
      </Watermark>
    </Page>
  );
}
